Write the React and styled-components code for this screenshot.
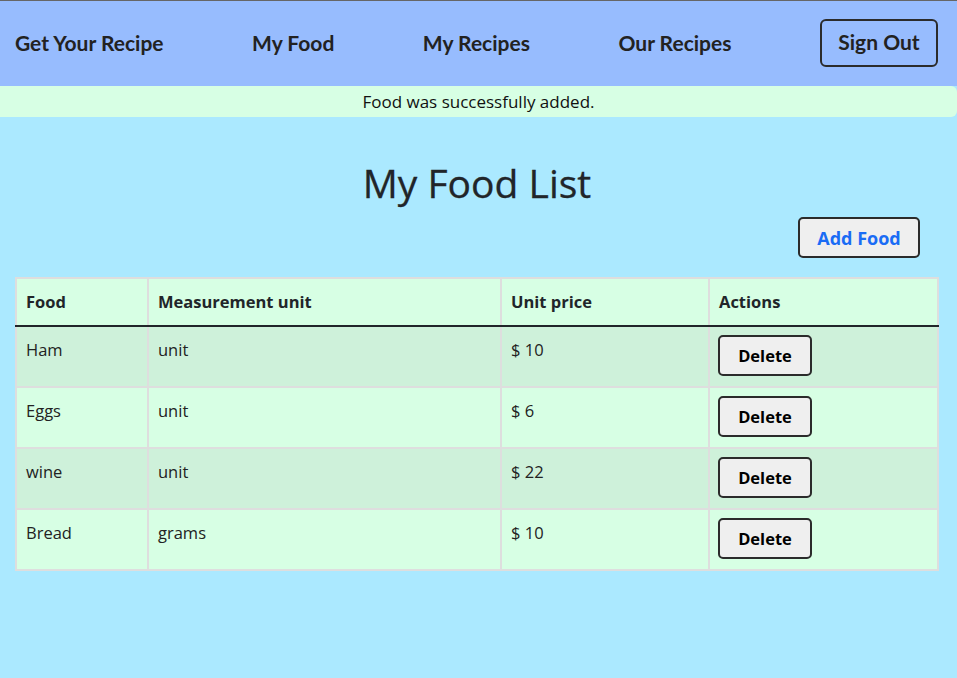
import React from 'react';
import styled, { createGlobalStyle } from 'styled-components';

const GlobalStyle = createGlobalStyle`
  html, body {
    margin: 0;
    padding: 0;
    background: #abe9ff;
  }
  body {
    font-family: "Open Sans", "Noto Sans", sans-serif;
    color: #212529;
  }
  * {
    box-sizing: border-box;
  }
`;

const Page = styled.div`
  min-height: 678px;
  background: #abe9ff;
  border-top: 1px solid #666;
`;

const Nav = styled.nav`
  height: 85px;
  background: #97bcfe;
  display: flex;
  align-items: center;
  justify-content: space-between;
  padding: 0 19px 2px 15px;
`;

const NavLink = styled.a`
  font-family: Lato, "Open Sans", sans-serif;
  font-weight: 700;
  font-size: 21px;
  color: #222;
  text-decoration: none;
`;

const SignOut = styled.button`
  font-family: Lato, "Open Sans", sans-serif;
  font-weight: 700;
  font-size: 21px;
  color: #222;
  background: transparent;
  border: 2px solid #2b2b2b;
  border-radius: 6px;
  width: 118px;
  height: 48px;
  padding: 0 0 2px;
`;

const Alert = styled.div`
  height: 31px;
  background: #d7ffe4;
  border-radius: 0 6px 6px 0;
  display: flex;
  align-items: center;
  justify-content: center;
  font-size: 17px;
  color: #111;
`;

const Main = styled.main`
  padding: 0 18px 0 15px;
`;

const Title = styled.h1`
  margin: 43px 0 0;
  text-align: center;
  font-weight: 500;
  font-size: 39px;
  line-height: 46px;
  -webkit-text-stroke: 0.3px #212529;
`;

const Toolbar = styled.div`
  display: flex;
  justify-content: flex-end;
  padding-right: 19px;
  margin-top: 11px;
`;

const Button = styled.button`
  font-family: "Open Sans", sans-serif;
  font-weight: 700;
  background: #efefef;
  border: 2px solid #2b2b2b;
  border-radius: 5px;
  padding: 0;
  color: ${(p) => (p.$primary ? '#1a6cf5' : '#000')};
  font-size: ${(p) => (p.$primary ? '18px' : '16.5px')};
  width: ${(p) => (p.$primary ? '122px' : '94px')};
  height: 41px;
  display: block;
`;

const Table = styled.table`
  margin-top: 19px;
  width: 924px;
  border-collapse: collapse;
  border: 2px solid #dedede;
  table-layout: fixed;
`;

const Th = styled.th`
  text-align: left;
  background: #d7ffe4;
  font-size: 16.5px;
  font-weight: 700;
  padding: 11px 9px 11px;
  line-height: 24px;
  border-left: 2px solid #dedede;
  border-bottom: 2px solid #212529;
`;

const Row = styled.tr`
  background: ${(p) => (p.$odd ? '#cef1da' : '#d7ffe4')};
  border-bottom: 2px solid #dedede;
`;

const Td = styled.td`
  vertical-align: top;
  font-size: 16.5px;
  line-height: 24px;
  padding: ${(p) => (p.$action ? '8px 8px 9px' : '11px 9px')};
  border-left: 2px solid #dedede;
  height: 61px;
  color: #222;
`;

const foods = [
  { name: 'Ham', unit: 'unit', price: 10 },
  { name: 'Eggs', unit: 'unit', price: 6 },
  { name: 'wine', unit: 'unit', price: 22 },
  { name: 'Bread', unit: 'grams', price: 10 },
];

export default function App() {
  return (
    <Page>
      <GlobalStyle />
      <Nav>
        <NavLink href="#">Get Your Recipe</NavLink>
        <NavLink href="#">My Food</NavLink>
        <NavLink href="#">My Recipes</NavLink>
        <NavLink href="#">Our Recipes</NavLink>
        <SignOut>Sign Out</SignOut>
      </Nav>
      <Alert>Food was successfully added.</Alert>
      <Main>
        <Title>My Food List</Title>
        <Toolbar>
          <Button $primary>Add Food</Button>
        </Toolbar>
        <Table>
          <colgroup>
            <col style={{ width: 132 }} />
            <col style={{ width: 353 }} />
            <col style={{ width: 208 }} />
            <col />
          </colgroup>
          <thead>
            <tr>
              <Th>Food</Th>
              <Th>Measurement unit</Th>
              <Th>Unit price</Th>
              <Th>Actions</Th>
            </tr>
          </thead>
          <tbody>
            {foods.map((f, i) => (
              <Row key={f.name} $odd={i % 2 === 0}>
                <Td>{f.name}</Td>
                <Td>{f.unit}</Td>
                <Td>$ {f.price}</Td>
                <Td $action>
                  <Button>Delete</Button>
                </Td>
              </Row>
            ))}
          </tbody>
        </Table>
      </Main>
    </Page>
  );
}
